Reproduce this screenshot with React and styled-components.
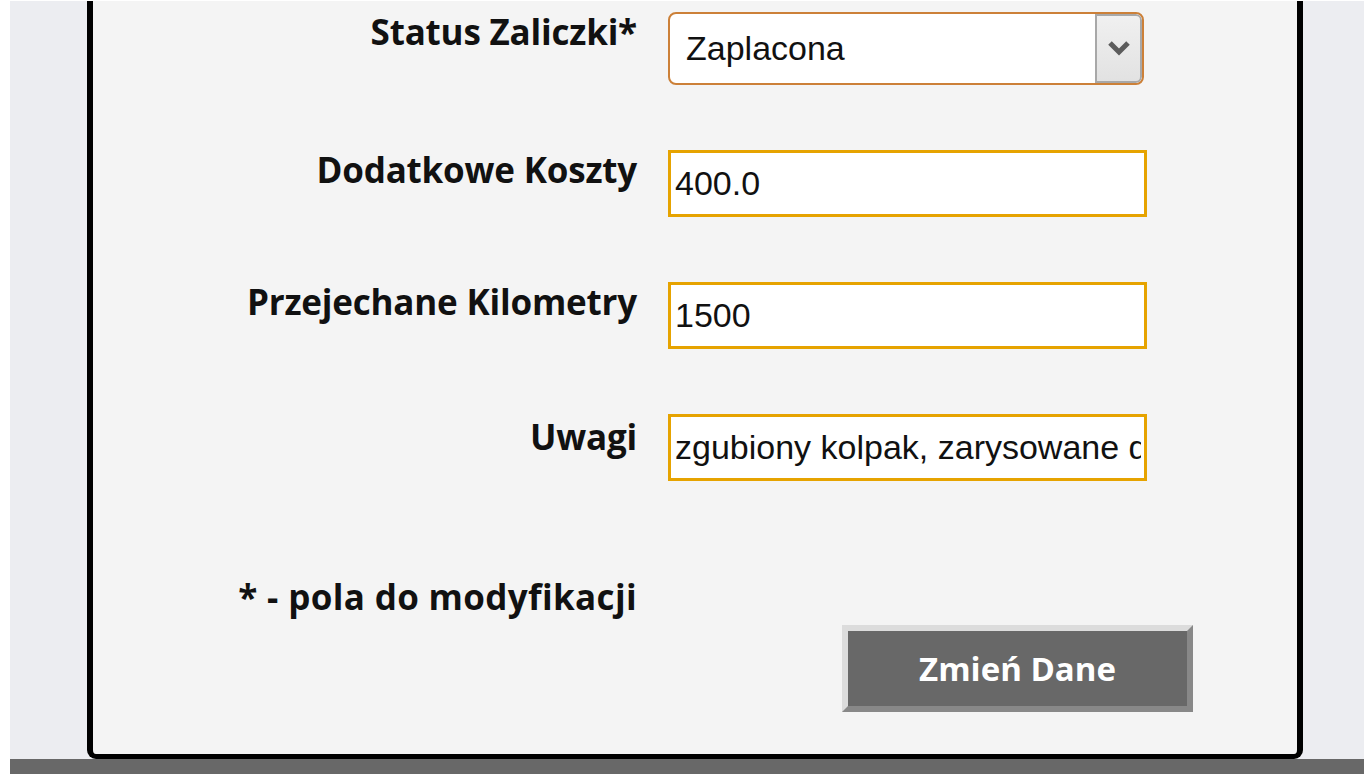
import React from 'react';
import styled, { createGlobalStyle } from 'styled-components';

const GlobalStyle = createGlobalStyle`
  html, body {
    margin: 0;
    padding: 0;
    background: #ffffff;
  }
  #root {
    height: 774px;
    overflow: hidden;
  }
`;

const Page = styled.div`
  height: 774px;
  box-sizing: border-box;
  padding: 1px 4px 0 10px;
  background: #ffffff;
`;

const Backdrop = styled.div`
  height: 100%;
  display: flex;
  flex-direction: column;
  background: #ecedf1;
`;

const Card = styled.div`
  flex: 1;
  margin: 0 61px 0 77px;
  box-sizing: border-box;
  padding-top: 11px;
  background: #f4f4f4;
  border: 6px solid #000;
  border-top: none;
  border-bottom-width: 5px;
  border-radius: 0 0 9px 9px;
`;

const Footer = styled.div`
  height: 15px;
  background: #686868;
`;

const Form = styled.div`
  display: flex;
  flex-direction: column;
  gap: 65px;
`;

const Row = styled.div`
  display: grid;
  grid-template-columns: 544px 479px;
  column-gap: 31px;
  align-items: start;
`;

const Label = styled.div`
  padding-top: ${(p) => p.offset ?? 0}px;
  text-align: right;
  font-family: "Open Sans", "DejaVu Sans", sans-serif;
  font-weight: 700;
  font-size: 35px;
  line-height: 40px;
  color: #111;
  letter-spacing: -0.2px;
`;

const SelectBox = styled.div`
  width: 476px;
  height: 73px;
  box-sizing: border-box;
  display: flex;
  align-items: stretch;
  border: 2px solid #cc8038;
  border-radius: 8px;
  background: #fff;
  overflow: hidden;
`;

const SelectValue = styled.div`
  flex: 1;
  display: flex;
  align-items: center;
  padding-left: 16px;
  font-family: "Liberation Sans", Arial, sans-serif;
  font-size: 34px;
  color: #111;
`;

const ArrowBox = styled.div`
  width: 47px;
  box-sizing: border-box;
  display: flex;
  align-items: center;
  justify-content: center;
  border: 2px solid #a8a8a8;
  border-radius: 0 6px 6px 0;
  background: linear-gradient(#f0f0f0, #e2e2e2);
`;

const TextInput = styled.input`
  width: 479px;
  height: 67px;
  box-sizing: border-box;
  margin: 0;
  padding: 0 3px 0 4px;
  border: 3px solid #e6a300;
  border-radius: 0;
  background: #fff;
  outline: none;
  font-family: "Liberation Sans", Arial, sans-serif;
  font-size: 34px;
  color: #111;
`;

const Note = styled.div`
  width: 544px;
  margin-top: 96px;
  text-align: right;
  font-family: "Open Sans", "DejaVu Sans", sans-serif;
  font-weight: 700;
  font-size: 35px;
  line-height: 40px;
  color: #111;
  letter-spacing: 0.35px;
`;

const Actions = styled.div`
  display: flex;
  justify-content: flex-end;
  padding-right: 104px;
  margin-top: 8px;
`;

const Button = styled.button`
  width: 351px;
  height: 87px;
  box-sizing: border-box;
  border: 6px solid;
  border-color: #dcdcdc #888888 #888888 #dcdcdc;
  background: #686868;
  color: #fff;
  font-family: "Open Sans", "DejaVu Sans", sans-serif;
  font-weight: 700;
  font-size: 33px;
  padding: 0;
  cursor: pointer;
`;

const Chevron = () => (
  <svg width="22" height="18" viewBox="0 0 22 18">
    <path d="M2 3 L11 12 L20 3" fill="none" stroke="#5c5c5c" strokeWidth="5" strokeLinejoin="miter" />
  </svg>
);

const fields = [
  { label: 'Dodatkowe Koszty', value: '400.0' },
  { label: 'Przejechane Kilometry', value: '1500' },
  { label: 'Uwagi', value: 'zgubiony kolpak, zarysowane drzwi', offset: 3 },
];

export default function App() {
  return (
    <>
      <GlobalStyle />
      <Page>
        <Backdrop>
          <Card>
            <Form>
              <Row>
                <Label>Status Zaliczki*</Label>
                <SelectBox>
                  <SelectValue>Zaplacona</SelectValue>
                  <ArrowBox>
                    <Chevron />
                  </ArrowBox>
                </SelectBox>
              </Row>
              {fields.map((f) => (
                <Row key={f.label}>
                  <Label offset={f.offset}>{f.label}</Label>
                  <TextInput type="text" readOnly value={f.value} />
                </Row>
              ))}
            </Form>
            <Note>* - pola do modyfikacji</Note>
            <Actions>
              <Button type="button">Zmień Dane</Button>
            </Actions>
          </Card>
          <Footer />
        </Backdrop>
      </Page>
    </>
  );
}
